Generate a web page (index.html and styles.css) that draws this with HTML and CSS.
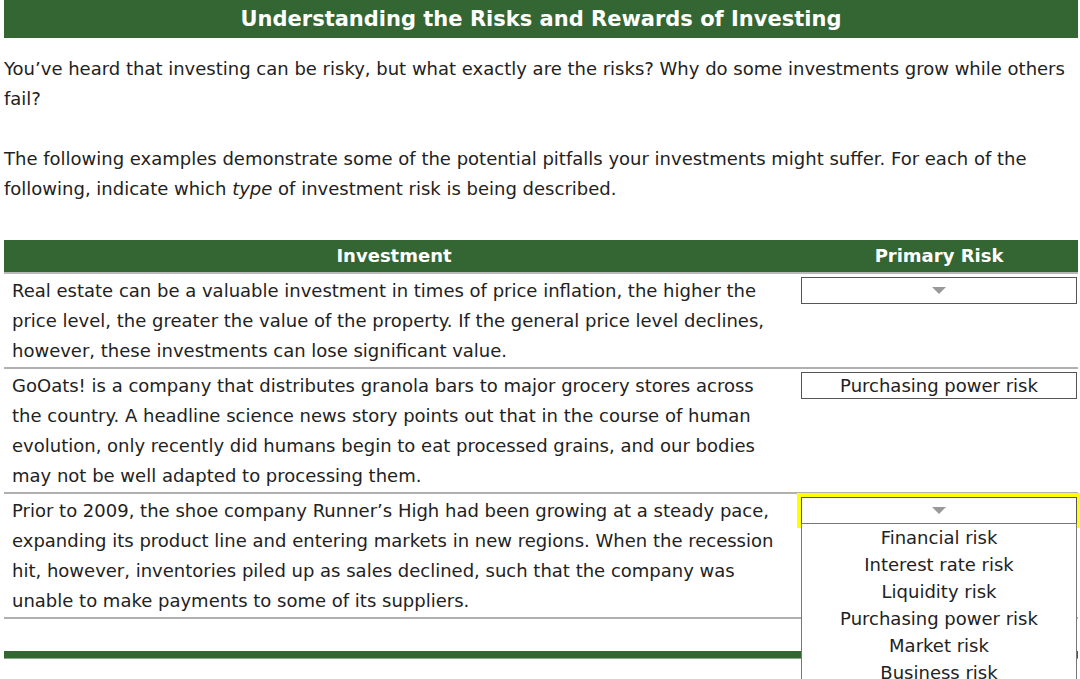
FILE: index.html
```html
<!DOCTYPE html>
<html lang="en">

<head>
     <meta charset="UTF-8">
     <title>Understanding the Risks and Rewards of Investing</title>
     <meta name="viewport" content="width=device-width, initial-scale=1.0">
     <link rel="stylesheet" href="styles.css">
</head>

<body>
     <div class="page">
          <h1 class="title">Understanding the Risks and Rewards of Investing</h1>

          <p class="intro">You’ve heard that investing can be risky, but what exactly are the risks? Why do some investments grow while others fail?</p>
          <p class="intro last">The following examples demonstrate some of the potential pitfalls your investments might suffer. For each of the following, indicate which <em>type</em> of investment risk is being described.</p>

          <div class="risk-table">
               <div class="thead">
                    <div class="th th-inv">Investment</div>
                    <div class="th">Primary Risk</div>
               </div>

               <div class="row">
                    <div class="desc">Real estate can be a valuable investment in times of price inflation, the higher the price level, the greater the value of the property. If the general price level declines, however, these investments can lose significant value.</div>
                    <div class="answer">
                         <div class="select"><span class="arrow"></span></div>
                    </div>
               </div>

               <div class="row">
                    <div class="desc">GoOats! is a company that distributes granola bars to major grocery stores across the country. A headline science news story points out that in the course of human evolution, only recently did humans begin to eat processed grains, and our bodies may not be well adapted to processing them.</div>
                    <div class="answer">
                         <div class="select">Purchasing power risk</div>
                    </div>
               </div>

               <div class="row">
                    <div class="desc">Prior to 2009, the shoe company Runner’s High had been growing at a steady pace, expanding its product line and entering markets in new regions. When the recession hit, however, inventories piled up as sales declined, such that the company was unable to make payments to some of its suppliers.</div>
                    <div class="answer">
                         <div class="select open">
                              <span class="arrow"></span>
                              <ul class="options">
                                   <li>Financial risk</li>
                                   <li>Interest rate risk</li>
                                   <li>Liquidity risk</li>
                                   <li>Purchasing power risk</li>
                                   <li>Market risk</li>
                                   <li>Business risk</li>
                              </ul>
                         </div>
                    </div>
               </div>
          </div>

          <div class="footer-bar"></div>
     </div>
</body>

</html>
```

FILE: styles.css
```css
:root {
     --green: #336633;
     --text: #222;
     --rule: #b0b0b0;
}

* {
     box-sizing: border-box;
}

body {
     margin: 0;
     font-family: 'DejaVu Sans', Verdana, sans-serif;
     font-size: 18px;
     color: var(--text);
     background: white;
}

.page {
     width: 1074px;
     margin-left: 4px;
     padding-bottom: 120px;
}

.title {
     margin: 0;
     height: 38px;
     line-height: 38px;
     background: var(--green);
     color: white;
     font-size: 21px;
     font-weight: bold;
     text-align: center;
}

.intro {
     margin: 16px 0 30px;
     line-height: 30px;
}

.intro+.intro {
     margin-top: 0;
}

.intro.last {
     margin-bottom: 36px;
}

.thead,
.row {
     display: grid;
     grid-template-columns: 796px 278px;
}

.thead {
     height: 34px;
     background: var(--green);
     color: white;
     font-weight: bold;
     border-bottom: 2px solid #b8b8b8;
}

.th {
     line-height: 32px;
     text-align: center;
}

.th-inv {
     padding-right: 16px;
}

.row {
     border-bottom: 2px solid var(--rule);
}

.desc {
     padding: 2px 16px 1px 8px;
     line-height: 30px;
}

.answer {
     padding: 3px 1px 0;
}

.select {
     position: relative;
     height: 27px;
     border: 1px solid #555;
     background: white;
     display: flex;
     align-items: center;
     justify-content: center;
}

.arrow {
     width: 0;
     height: 0;
     border-left: 7px solid transparent;
     border-right: 7px solid transparent;
     border-top: 7px solid #999;
}

.select.open {
     outline: 4px solid #ffff00;
}

.options {
     position: absolute;
     top: 100%;
     left: -1px;
     right: -1px;
     z-index: 5;
     margin: 0;
     padding: 0 0 30px;
     list-style: none;
     background: white;
     border: 1px solid #777;
}

.options li {
     line-height: 27px;
     text-align: center;
}

.footer-bar {
     margin-top: 32px;
     height: 8px;
     background: var(--green);
     border-bottom: 1px solid #8aa88a;
}
```
